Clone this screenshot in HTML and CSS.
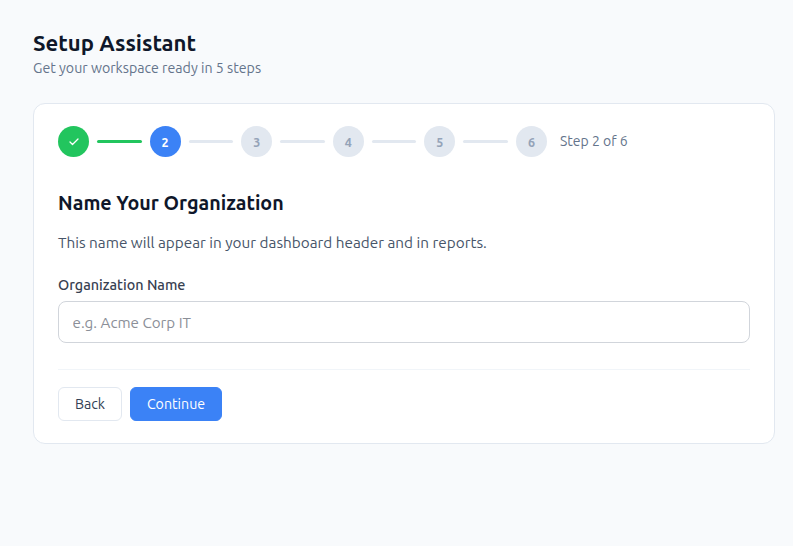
FILE: index.html
```html
<!DOCTYPE html>
<html lang="en">
<head>
<meta charset="utf-8">
<title>Setup Assistant</title>
<link rel="stylesheet" href="styles.css">
</head>
<body>
<main class="page">
  <header class="head">
    <h1 class="title">Setup Assistant</h1>
    <p class="subtitle">Get your workspace ready in 5 steps</p>
  </header>
  <section class="card">
    <div class="stepper">
      <span class="dot done"><svg class="check" viewBox="0 0 24 24" width="12" height="12" fill="none" stroke="#fff" stroke-width="2.6" stroke-linecap="round" stroke-linejoin="round"><path d="M20 6 9 17l-5-5"/></svg></span>
      <span class="line done-line"></span>
      <span class="dot active">2</span>
      <span class="line"></span>
      <span class="dot">3</span>
      <span class="line"></span>
      <span class="dot">4</span>
      <span class="line"></span>
      <span class="dot">5</span>
      <span class="line"></span>
      <span class="dot">6</span>
      <span class="step-label">Step 2 of 6</span>
    </div>
    <h2 class="heading">Name Your Organization</h2>
    <p class="desc">This name will appear in your dashboard header and in reports.</p>
    <label class="field-label" for="org">Organization Name</label>
    <input class="field" id="org" type="text" placeholder="e.g. Acme Corp IT">
    <div class="actions">
      <button class="btn secondary" type="button">Back</button>
      <button class="btn primary" type="button">Continue</button>
    </div>
  </section>
</main>
</body>
</html>
```
FILE: styles.css
```css
* { box-sizing: border-box; }
html, body { margin: 0; height: 100%; }
body {
  background: #f8fafc;
  font-family: Ubuntu, system-ui, "Noto Sans", sans-serif;
  color: #0f172a;
  overflow: hidden;
}
.page { padding: 31px 18px 32px 33px; }
.head { margin-bottom: 25px; }
.title { margin: 0; font-size: 22.1px; line-height: 24px; font-weight: 700; color: #0f172a; }
.subtitle { margin: 3px 0 0; font-size: 14.2px; line-height: 20px; color: #64748b; }
.card {
  background: #fff;
  border: 1px solid #e2e8f0;
  border-radius: 12px;
  padding: 22px 24px 22px;
  height: 341px;
}
.stepper { display: flex; align-items: center; gap: 8px; height: 31px; margin-bottom: 33px; }
.dot {
  flex: none;
  width: 31px;
  height: 31px;
  border-radius: 50%;
  background: #e2e8f0;
  color: #94a3b8;
  font-size: 12.5px;
  font-weight: 700;
  display: flex;
  align-items: center;
  justify-content: center;
}
.done { background: #22c55e; }
.active { background: #3b82f6; color: #fff; }
.line { flex: none; width: 44.6px; height: 3px; background: #e2e8f0; border-radius: 2px; }
.done-line { background: #22c55e; }
.step-label { margin-left: 5px; font-size: 14px; line-height: 20px; margin-top: -2px; color: #64748b; white-space: nowrap; }
.heading { margin: 0 0 16px; font-size: 19.7px; line-height: 26px; font-weight: 700; color: #0f172a; }
.desc { margin: 0 0 21px; font-size: 15.3px; line-height: 22px; color: #475569; }
.field-label { display: block; margin-bottom: 6px; font-size: 14.4px; line-height: 20px; font-weight: 500; color: #374151; }
.field {
  display: block;
  width: 100%;
  height: 42px;
  padding: 0 13.5px;
  border: 1px solid #d1d5db;
  border-radius: 8px;
  background: #fff;
  font: inherit;
  font-size: 15.2px;
  color: #0f172a;
}
.field::placeholder { color: #8b8f98; opacity: 1; }
.actions { display: flex; gap: 8px; margin-top: 26px; padding-top: 17px; border-top: 1px solid #f1f5f9; }
.btn { height: 34px; border-radius: 6px; font: inherit; font-size: 14.2px; padding: 0; }
.secondary { width: 64px; background: #fff; border: 1px solid #e2e8f0; color: #334155; }
.primary { width: 92px; background: #3b82f6; border: 1px solid #3b82f6; color: #fff; }
```
